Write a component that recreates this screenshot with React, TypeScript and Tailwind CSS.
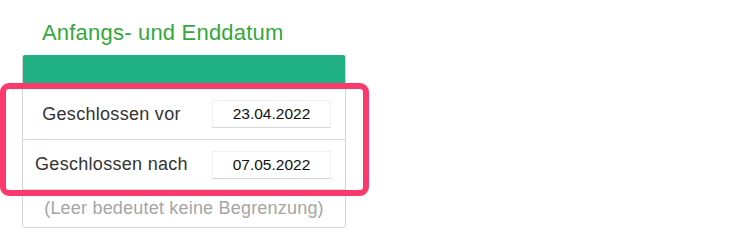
import React from "react"

const rows = [
  { label: "Geschlossen vor", value: "23.04.2022" },
  { label: "Geschlossen nach", value: "07.05.2022" },
]

export default function App() {
  return (
    <div
      className="relative h-[252px] w-[736px] bg-white pl-[22px] pt-[20px]"
      style={{ fontFamily: '"Liberation Sans", Arial, sans-serif' }}
    >
      <h2 className="ml-[20px] h-[35px] text-[22px] leading-[26px] tracking-[0.2px] text-[#34a83a]">
        Anfangs- und Enddatum
      </h2>
      <div className="w-[324px] overflow-hidden rounded-b-[4px] border border-t-0 border-[#d4d4d4]">
        <div className="h-[34px] rounded-t-[2px] bg-[#20b183]" />
        {rows.map((row, i) => (
          <div
            key={row.label}
            className={`flex h-[50px] items-center ${i > 0 ? "border-t border-[#d8d8d8]" : ""}`}
          >
            <div className="w-[189px] pr-[12px] text-center text-[18px] tracking-[0.3px] text-[#333]">
              {row.label}
            </div>
            <div className="flex h-[28px] w-[119px] items-center justify-center border border-[#f0f0f0] border-b-[#d6d6d6] bg-white text-[15.5px] text-[#111]">
              {row.value}
            </div>
          </div>
        ))}
        <div className="flex h-[38px] items-center justify-center border-t border-[#d8d8d8] text-[18px] tracking-[0.2px] text-[#a5a5a5]">
          (Leer bedeutet keine Begrenzung)
        </div>
      </div>
      <div className="pointer-events-none absolute left-0 top-[83px] h-[113px] w-[369px] rounded-[9px] border-[6px] border-[#fa3a6c]" />
    </div>
  )
}
